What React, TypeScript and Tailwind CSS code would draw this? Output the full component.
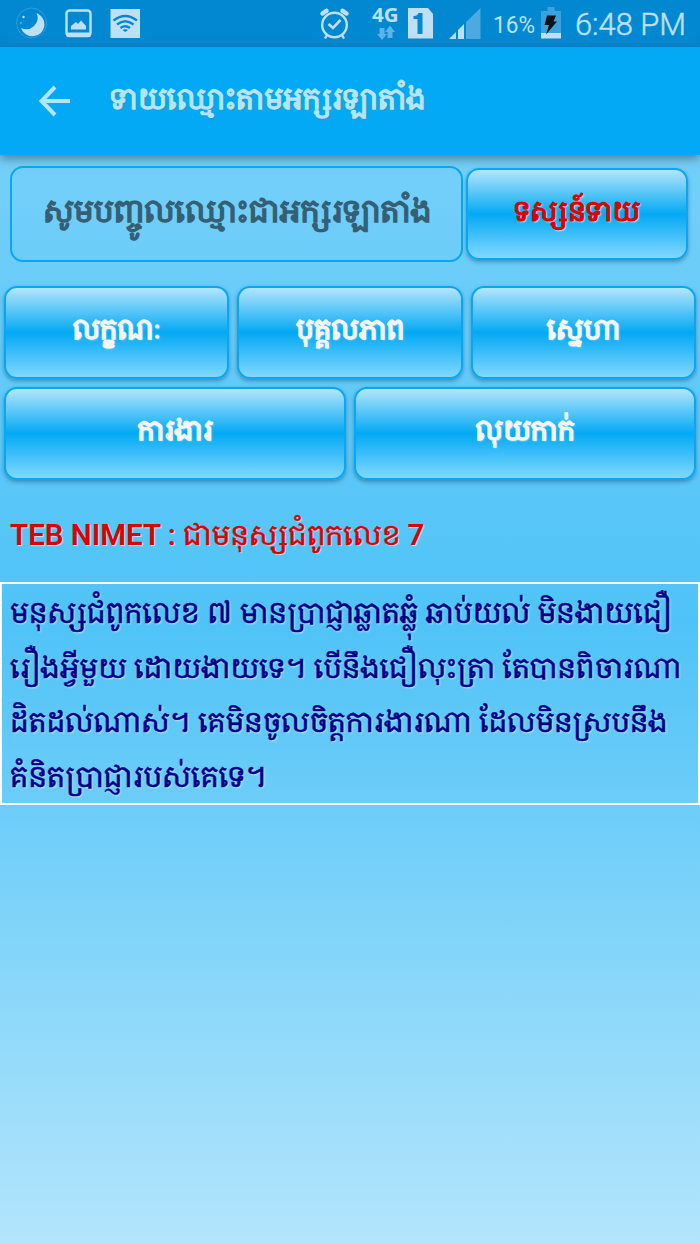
import React from "react";

const KHMER = "font-['Noto_Serif_Khmer','Khmer_OS_Content','Noto_Sans_Khmer','Khmer_OS',serif]";

function Action({ label, box, text }: { label: string; box: string; text: string }) {
  return (
    <button
      className={`flex items-center justify-center rounded-[13px] border-2 border-[#09a6f3] bg-linear-to-b/srgb from-[#b3e5fc] via-[#03a9f4] to-[#81d8ff] pb-[6px] shadow-[0_2px_4px_rgba(0,50,90,0.4)] ${box}`}
    >
      <span className={`whitespace-nowrap text-[27.300px] ${text}`}>{label}</span>
    </button>
  );
}

function StatusBar() {
  return (
    <div className="h-[47px] shrink-0 bg-[#0288d1]">
      <svg width="700" height="47" viewBox="0 0 700 47" fill="#bde0f4">
        <circle cx="31.500" cy="23" r="15" fill="none" stroke="#2f9cd9" strokeWidth="1" />
        <path d="M36.500 13A12 12 0 1 1 21 28A11.500 11.500 0 0 0 36.500 13Z" />
        <circle cx="23.500" cy="17" r="1.200" />
        <circle cx="21" cy="23" r="0.900" fill="#5db2e2" />
        <rect x="66.500" y="10.500" width="24" height="25.500" rx="3" fill="none" stroke="#bde0f4" strokeWidth="2.400" />
        <rect x="66.500" y="32.500" width="24" height="4.500" rx="1" />
        <path d="M71 29.500V26L76 22L78 24L81 20.500L86 26V29.500Z" />
        <rect x="110.500" y="9" width="29.500" height="29" />
        <g fill="none" stroke="#0288d1" strokeWidth="2.300">
          <path d="M113.500 20.500Q125.200 11.500 137 20.500" />
          <path d="M117 24.500Q125.200 18 133.500 24.500" />
          <path d="M120.500 28Q125.200 24.500 130 28" />
        </g>
        <path d="M122.500 30Q125.200 28.500 128 30L125.200 32Z" fill="#0288d1" />
        <g fill="none" stroke="#bde0f4" strokeWidth="2.400">
          <circle cx="334.500" cy="25" r="12.300" />
          <path d="M328.500 24L333 28L340.500 20" strokeWidth="2.600" />
          <path d="M322.500 13.500L326.500 10.800M342.500 10.800L346.500 13.500" strokeWidth="4.500" strokeLinecap="round" />
          <path d="M327 35L325 38.500M342 35L344 38.500" />
        </g>
        <text x="372" y="22" fontFamily="Open Sans" fontWeight="700" fontSize="20" textLength="26.500" lengthAdjust="spacingAndGlyphs">4G</text>
        <path d="M379.500 28H384.500V34H387L382 40L377 34H379.500ZM387.500 38H392.500V32H395L390 25.500L385 32H387.500Z" fill="#5fb3e2" />
        <path d="M408 8H428L433 14V38.500H408Z" />
        <path d="M413.500 19V16C417 16 417.500 15 418.500 13H422.500V34H417.500V19Z" fill="#0288d1" />
        <path d="M449 39L456 32V39ZM458 30L464 24V39H458Z" />
        <path d="M466 22L480.500 8V39H466Z" fill="#4da9df" />
        <text x="493" y="33" fontFamily="Roboto" fontSize="24" textLength="42" lengthAdjust="spacingAndGlyphs">16%</text>
        <path d="M547.500 7H554.500V11H561V34H541V11H547.500Z" fill="#3ca2dc" />
        <rect x="541" y="33" width="20" height="5.500" />
        <path d="M547 15.500H556L553.500 21.500H557L546 34.500L549 25H544.500Z" fill="#101216" />
        <text x="575" y="35" fontFamily="Roboto" fontSize="32" fontWeight="300" stroke="#bde0f4" strokeWidth="0.500" textLength="111" lengthAdjust="spacingAndGlyphs">6:48 PM</text>
      </svg>
    </div>
  );
}

const LINES = [
  { text: "មនុស្សជំពូកលេខ ៧ មានប្រាជ្ញាឆ្លាតឆ្លុំ ឆាប់យល់ មិនងាយជឿ", size: "text-[28.500px]" },
  { text: "រឿងអ្វីមួយ ដោយងាយទេ។ បើនឹងជឿលុះត្រា តែបានពិចារណា", size: "text-[28.250px]" },
  { text: "ដិតដល់ណាស់។ គេមិនចូលចិត្តការងារណា ដែលមិនស្របនឹង", size: "text-[28.300px]" },
  { text: "គំនិតប្រាជ្ញារបស់គេទេ។", size: "text-[28.700px]" },
];

export default function App() {
  const white = "text-[#f5f5f5] [-webkit-text-stroke:1.500px_#f5f5f5] [text-shadow:1px_1px_2px_#bfe8ff]";
  return (
    <div className={`flex h-[1244px] w-[700px] flex-col overflow-hidden bg-linear-to-b/srgb from-[#81d4fa] via-[#4fc3f7] to-[#b3e5fc] ${KHMER}`}>
      <StatusBar />
      <header className="flex h-[108px] shrink-0 items-center bg-[#03a9f4] pl-[38px] shadow-[0_3px_10px_rgba(60,90,110,0.75)]">
        <svg width="34" height="34" viewBox="0 0 34 34" fill="none" stroke="#b3e5fc" strokeWidth="4">
          <path d="M32 17H4M17 3L3.500 17L17 31" />
        </svg>
        <h1 className="ml-[38px] whitespace-nowrap pb-[6px] text-[28.600px] text-[#b3e5fc] [-webkit-text-stroke:1.300px_#b3e5fc] [text-shadow:1px_1px_1px_#607d8b]">ទាយឈ្មោះតាមអក្សរឡាតាំង</h1>
      </header>
      <div className="mt-[11px] flex h-[96px] shrink-0 gap-[3px] pl-[10px]">
        <div className="flex w-[453px] items-center rounded-[13px] border-2 border-[#09a6f3] pb-[6px] pl-[31px]">
          <span className="whitespace-nowrap text-[30.500px] text-[#345f75] [-webkit-text-stroke:1.400px_#345f75]">សូមបញ្ចូលឈ្មោះជាអក្សរឡាតាំង</span>
        </div>
        <Action label="ទស្សន៍ទាយ" box="mt-[2px] h-[92px] w-[222px]" text="text-[#dd0000] [-webkit-text-stroke:1.200px_#dd0000] [text-shadow:1px_1px_2px_white]" />
      </div>
      <div className="mt-[24px] grid shrink-0 grid-cols-3 gap-x-[8px] px-[4px]">
        <Action label="លក្ខណៈ" box="h-[93px]" text={white} />
        <Action label="បុគ្គលភាព" box="h-[93px]" text={white} />
        <Action label="ស្នេហា" box="h-[93px]" text={white} />
      </div>
      <div className="mt-[8px] grid shrink-0 grid-cols-2 gap-x-[8px] px-[4px]">
        <Action label="ការងារ" box="h-[93px]" text={white} />
        <Action label="លុយកាក់" box="h-[93px]" text={white} />
      </div>
      <div className="flex h-[102px] shrink-0 items-center whitespace-nowrap pl-[10px] pt-[8px] text-[28.400px] text-[#dd0000] [text-shadow:1px_1px_1px_#cfe8f5]">
        <span className="font-['Roboto'] text-[29.500px] font-semibold">TEB NIMET :&nbsp;</span>
        <span className="pb-[2px] [-webkit-text-stroke:0.400px_#dd0000]">ជាមនុស្សជំពូកលេខ</span>
        <span className="font-['Roboto'] text-[29.500px] font-semibold">&nbsp;7</span>
      </div>
      <div className="h-[223px] shrink-0 border-2 border-white pl-[8px] pt-[1px] text-[#00008b] [-webkit-text-stroke:0.500px_#00008b] [text-shadow:1px_1px_2px_#cfe8f5]">
        {LINES.map((line) => (
          <p key={line.text} className={`h-[54.500px] whitespace-nowrap leading-[54.500px] ${line.size}`}>{line.text}</p>
        ))}
      </div>
    </div>
  );
}
